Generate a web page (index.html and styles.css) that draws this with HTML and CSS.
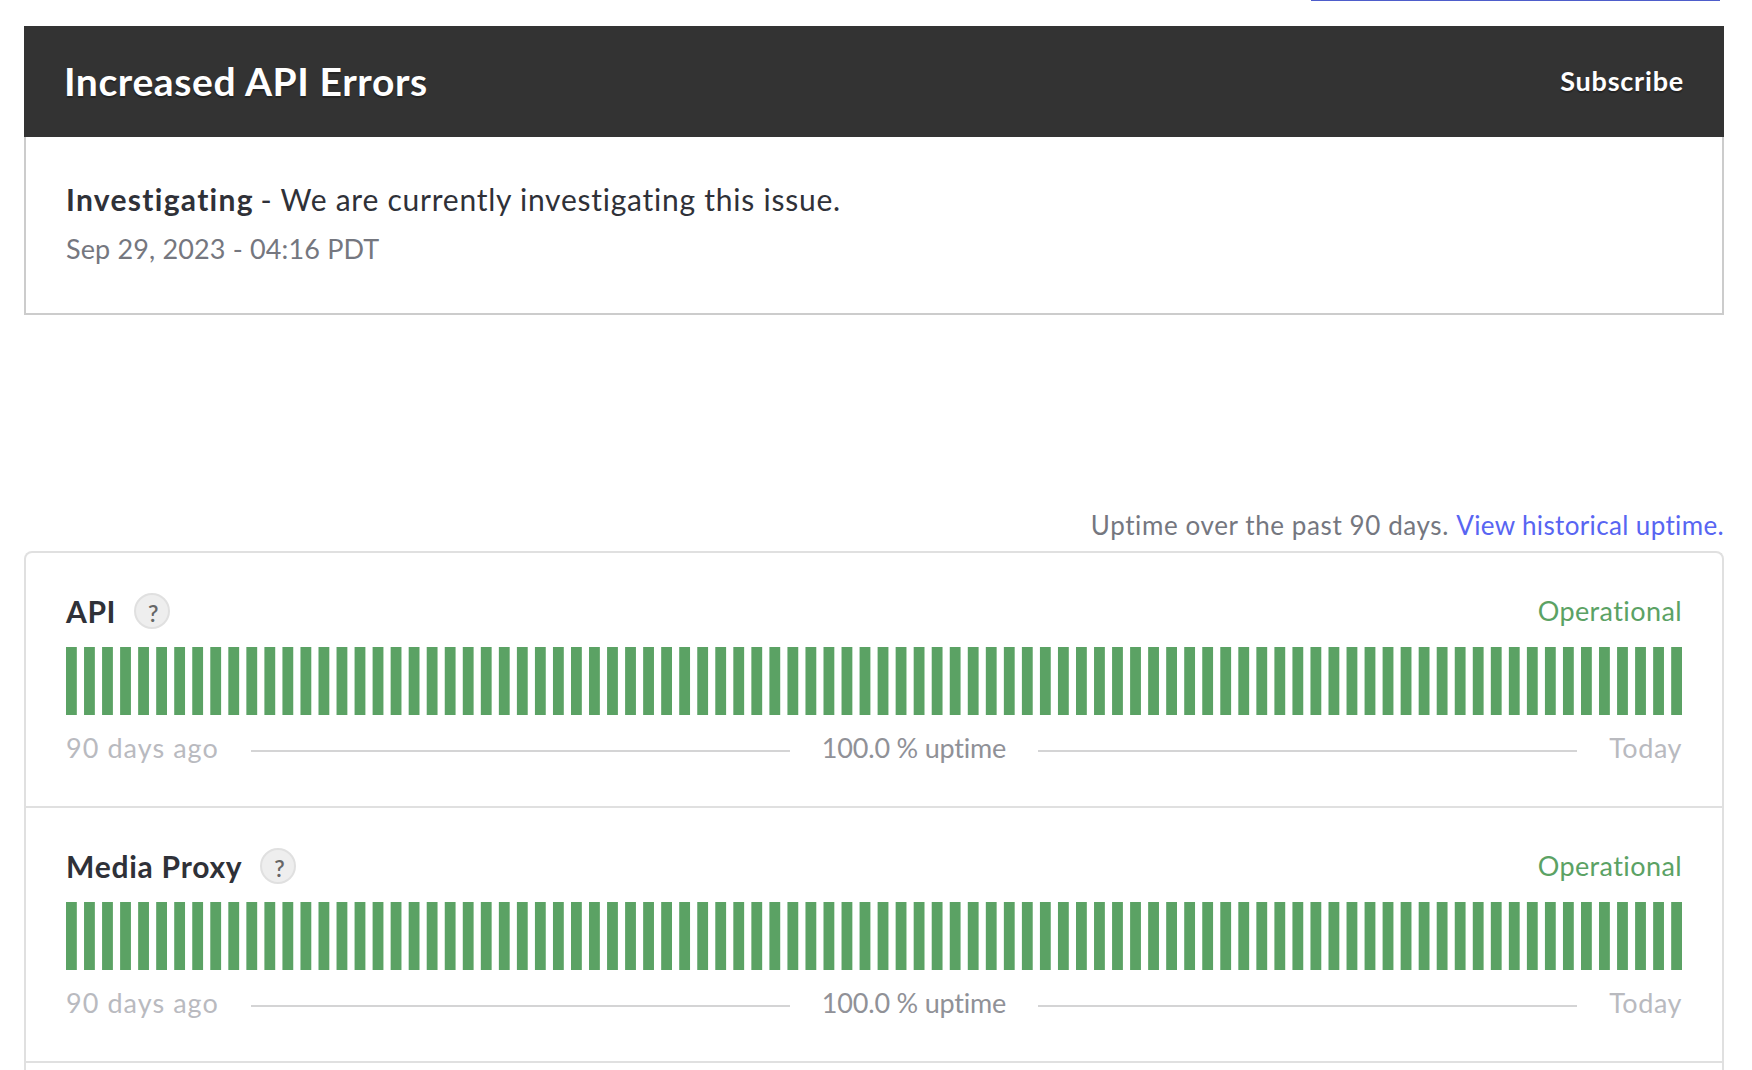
FILE: index.html
```html
<!DOCTYPE html>
<html lang="en">
<head>
<meta charset="utf-8">
<title>Status</title>
<link rel="stylesheet" href="styles.css">
</head>
<body>
<main class="page">
  <div class="subscribe-bar"></div>

  <section class="incident">
    <header class="incident-header">
      <h1 class="incident-title">Increased API Errors</h1>
      <a class="incident-subscribe">Subscribe</a>
    </header>
    <div class="incident-body">
      <p class="update"><strong class="update-status">Investigating</strong> <span class="update-text">- We are currently investigating this issue.</span></p>
      <p class="update-date">Sep 29, 2023 - 04:16 PDT</p>
    </div>
  </section>

  <p class="uptime-note">Uptime over the past 90 days. <a class="uptime-link">View historical uptime.</a></p>

  <section class="components">
    <article class="component">
      <div class="component-head">
        <h2 class="component-name component-name-short">API</h2>
        <span class="help">?</span>
        <span class="component-status">Operational</span>
      </div>
      <svg class="chart" viewBox="0 0 448 34" preserveAspectRatio="none"></svg>
      <div class="legend">
        <span class="legend-start">90 days ago</span>
        <span class="legend-line"></span>
        <span class="legend-value">100.0 % uptime</span>
        <span class="legend-line"></span>
        <span class="legend-end">Today</span>
      </div>
    </article>
    <article class="component">
      <div class="component-head">
        <h2 class="component-name">Media Proxy</h2>
        <span class="help">?</span>
        <span class="component-status">Operational</span>
      </div>
      <svg class="chart" viewBox="0 0 448 34" preserveAspectRatio="none"></svg>
      <div class="legend">
        <span class="legend-start">90 days ago</span>
        <span class="legend-line"></span>
        <span class="legend-value">100.0 % uptime</span>
        <span class="legend-line"></span>
        <span class="legend-end">Today</span>
      </div>
    </article>
    <article class="component component-cut"></article>
  </section>
</main>
<script src="chart.js"></script>
</body>
</html>
```
FILE: styles.css
```css
* {
  box-sizing: border-box;
}

body {
  margin: 0;
  background: #fff;
  color: #2f3138;
  font-family: Lato, "Open Sans", sans-serif;
  font-variant-ligatures: none;
}

h1, h2, p {
  margin: 0;
}

.page {
  padding: 0 28px 0 24px;
}

/* Lower edge of the subscribe button, scrolled out of view */
.subscribe-bar {
  width: 409px;
  height: 1px;
  margin: 0 4px 25px auto;
  background: #4e5dcb;
}

.incident-header {
  display: flex;
  justify-content: space-between;
  height: 111px;
  padding: 31px 40px 0;
  background: #333;
  color: #fff;
  text-shadow: 0 2px 1px rgba(0, 0, 0, 0.3);
}

.incident-title {
  font-size: 39px;
  font-weight: 700;
  line-height: 48px;
  letter-spacing: 0.6px;
}

.incident-subscribe {
  font-size: 27px;
  font-weight: 700;
  line-height: 47px;
  letter-spacing: 0.8px;
}

.incident-body {
  height: 178px;
  padding: 40px 40px 0;
  border: 2px solid #ccc;
  border-top: 0;
}

.update {
  font-size: 30px;
  line-height: 44px;
}

.update-status {
  letter-spacing: 1.3px;
}

.update-text {
  margin-left: -1px;
  letter-spacing: 0.76px;
}

.update-date {
  margin-top: 9px;
  color: #75777f;
  font-size: 27px;
  line-height: 38px;
  letter-spacing: 0.15px;
}

.uptime-note {
  margin-top: 190px;
  color: #75777f;
  font-size: 26px;
  line-height: 40px;
  letter-spacing: 0.6px;
  text-align: right;
}

.uptime-link {
  color: #5865f2;
  letter-spacing: 0.36px;
}

.components {
  margin-top: 6px;
  border: 2px solid #e0e0e0;
  border-bottom: 0;
  border-radius: 8px 8px 0 0;
}

.component {
  height: 255px;
  padding: 40px 40px 0;
  border-bottom: 2px solid #e0e0e0;
}

.component-cut {
  height: 7px;
  padding: 0;
  border-bottom: 0;
}

.component-head {
  display: flex;
  align-items: center;
  height: 36px;
}

.component-name {
  font-size: 30px;
  font-weight: 700;
  line-height: 36px;
  letter-spacing: 0.75px;
}

.component-name-short {
  letter-spacing: 0.6px;
}

.help {
  width: 36px;
  height: 36px;
  margin-left: 18px;
  border: 2px solid #e0e0e0;
  border-radius: 50%;
  background: #eee;
  color: #666;
  font-size: 23px;
  font-weight: 600;
  line-height: 36px;
  padding-left: 2px;
  text-align: center;
}

.component-status {
  margin-left: auto;
  color: #5ba264;
  font-size: 27px;
  line-height: 36px;
  letter-spacing: 0.4px;
}

.chart {
  display: block;
  width: 1616px;
  height: 68px;
  margin-top: 18px;
  fill: #5ba264;
}

.legend {
  display: flex;
  align-items: center;
  height: 40px;
  margin-top: 13px;
  font-size: 27px;
  line-height: 40px;
}

.legend-start,
.legend-end {
  color: #b9babf;
}

.legend-start {
  letter-spacing: 1.05px;
}

.legend-value {
  color: #909197;
  letter-spacing: -0.2px;
}

.legend-end {
  letter-spacing: 0.55px;
}

.legend-line {
  flex: 1;
  height: 2px;
  margin: 6px 32px 0;
  background: #d4d4d5;
}
```
FILE: chart.js
```js
const DAYS = 90;

document.querySelectorAll('.chart').forEach((chart) => {
  for (let day = 0; day < DAYS; day += 1) {
    const bar = document.createElementNS('http://www.w3.org/2000/svg', 'rect');
    bar.setAttribute('x', day * 5);
    bar.setAttribute('y', 0);
    bar.setAttribute('width', 3);
    bar.setAttribute('height', 34);
    chart.appendChild(bar);
  }
});
```
